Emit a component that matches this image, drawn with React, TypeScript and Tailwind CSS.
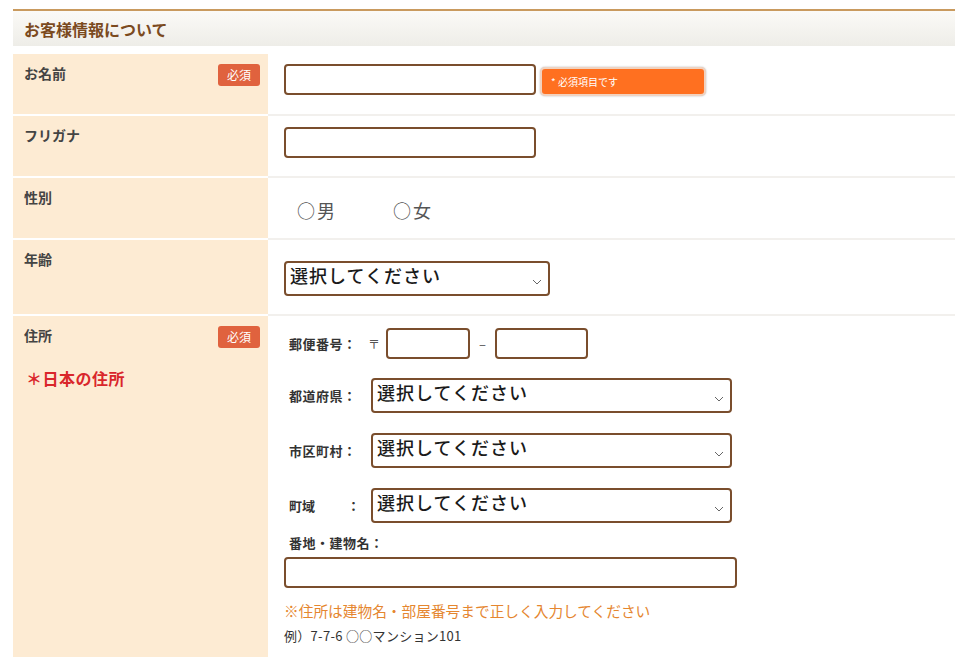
const jp = "font-['Noto_Sans_CJK_JP','Noto_Sans',sans-serif]";

const Badge = () => (
  <span className="flex h-[22px] w-[42px] items-center justify-center rounded-[3px] bg-[#e0623e] text-[12px] text-white">
    必須
  </span>
);

const Chevron = () => (
  <svg width="10" height="6" viewBox="0 0 10 6" className="shrink-0">
    <path d="M1 1l4 4 4-4" fill="none" stroke="#666" strokeWidth="1" />
  </svg>
);

const FakeSelect = ({ w }: { w: string }) => (
  <div className={`flex h-[35px] ${w} items-start justify-between rounded-[4px] border-2 border-[#7a4e2d] bg-white pl-[4px] pr-[6px]`}>
    <span className="pt-[1px] text-[18px] leading-[22px] font-medium tracking-[1px] text-[#1a1a1a]">選択してください</span>
    <span className="self-center pt-[6px]">
      <Chevron />
    </span>
  </div>
);

const TextBox = ({ w, h = "h-[31px]" }: { w: string; h?: string }) => (
  <input type="text" className={`${w} ${h} rounded-[4px] border-2 border-[#7a4e2d] bg-white outline-none`} />
);

const Row = ({
  label,
  required,
  extra,
  h,
  children,
}: {
  label: string;
  required?: boolean;
  extra?: React.ReactNode;
  h: string;
  children: React.ReactNode;
}) => (
  <div className={`grid grid-cols-[255px_1fr] ${h}`}>
    <div className="border-b-2 border-white bg-[#fdebd3] pl-[11px] pr-[8px] pt-[10px]">
      <div className="flex items-start justify-between">
        <span className="text-[14px] leading-[19px] font-bold text-[#444]">{label}</span>
        {required && <Badge />}
      </div>
      {extra}
    </div>
    <div className="border-b-2 border-[#f2f0ed] pl-[16px]">{children}</div>
  </div>
);

export default function App() {
  return (
    <div className={`h-[657px] overflow-hidden bg-white pl-[13px] pt-[9px] ${jp}`}>
      <div className="flex h-[37px] items-center border-t-2 border-[#c99a5e] bg-gradient-to-b from-[#fbfaf7] to-[#eeede8] pl-[11px]">
        <h2 className="text-[16px] font-bold text-[#7b4a1e]">お客様情報について</h2>
      </div>

      <div className="mt-[8px]">
        <Row label="お名前" required h="h-[62px]">
          <div className="flex items-start gap-[4px] pt-[10px]">
            <TextBox w="w-[252px]" />
            <div className="mt-[3px] flex h-[29px] w-[166px] items-center rounded-[5px] border-2 border-[#f1d2bf] bg-[#ff7020] pl-[9px] text-[10px] text-white shadow-[0_0_2px_rgba(0,0,0,0.3)]">
              * 必須項目です
            </div>
          </div>
        </Row>

        <Row label="フリガナ" h="h-[62px]">
          <div className="pt-[11px]">
            <TextBox w="w-[252px]" />
          </div>
        </Row>

        <Row label="性別" h="h-[62px]">
          <div className="flex gap-[56px] pl-[13px] pt-[19px] text-[18px] text-[#555]">
            <label className="tracking-[2px]">○男</label>
            <label className="tracking-[2px]">○女</label>
          </div>
        </Row>

        <Row label="年齢" h="h-[76px]">
          <div className="pt-[21px]">
            <FakeSelect w="w-[266px]" />
          </div>
        </Row>

        <Row
          label="住所"
          required
          h="h-[360px]"
          extra={<div className="mt-[18px] pl-[2px] text-[16px] font-bold tracking-[0.5px] text-[#d9262b]">＊日本の住所</div>}
        >
          <div className="pt-[12px] text-[13px] font-bold text-[#333]">
            <div className="flex items-center pl-[5px]">
              <span className="w-[79px] tracking-[0.5px]">郵便番号：</span>
              <span className="w-[18px] text-[12px] font-normal text-[#555]">〒</span>
              <TextBox w="w-[84px]" />
              <span className="w-[25px] text-center font-normal text-[#555]">–</span>
              <TextBox w="w-[93px]" />
            </div>

            <div className="mt-[19px] flex items-center pl-[5px]">
              <span className="w-[82px] tracking-[0.5px]">都道府県：</span>
              <FakeSelect w="w-[361px]" />
            </div>
            <div className="mt-[20px] flex items-center pl-[5px]">
              <span className="w-[82px] tracking-[0.5px]">市区町村：</span>
              <FakeSelect w="w-[361px]" />
            </div>
            <div className="mt-[20px] flex items-center pl-[5px]">
              <span className="w-[82px] whitespace-pre">町域　　  ：</span>
              <FakeSelect w="w-[361px]" />
            </div>

            <div className="mt-[10px] pl-[5px] leading-[20px] tracking-[0.5px]">番地・建物名：</div>
            <div className="mt-[4px]">
              <TextBox w="w-[453px]" h="h-[31px]" />
            </div>

            <div className="mt-[12px] text-[14.7px] font-normal text-[#e5862f]">※住所は建物名・部屋番号まで正しく入力してください</div>
            <div className="mt-[4px] text-[13px] font-normal tracking-[0.3px] text-[#333]">例）7-7-6 ○○マンション101</div>
          </div>
        </Row>
      </div>
    </div>
  );
}
